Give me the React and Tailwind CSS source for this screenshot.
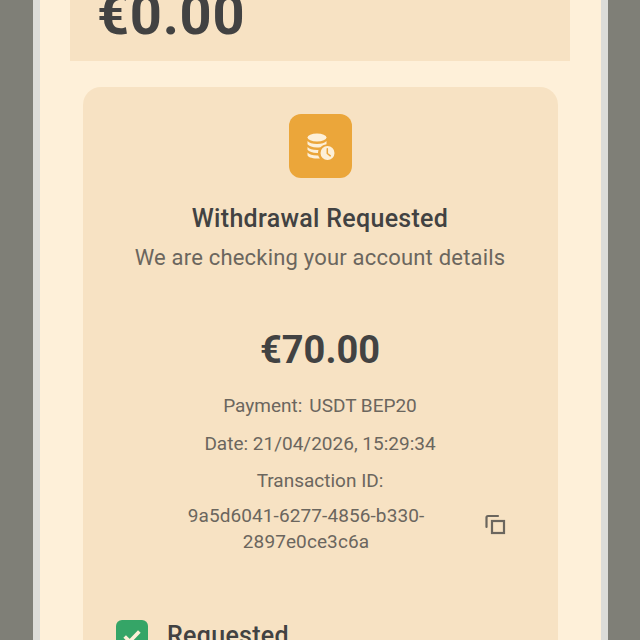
export default function App() {
  return (
    <div className="h-[640px] w-[640px] overflow-hidden bg-[#7f7f77] pl-[33px] pr-[32px] font-['Roboto',sans-serif]">
      <div className="flex h-[640px] flex-col border-x-[7px] border-x-[#dcdcd8] bg-[#fef0d9] pl-[30px] pr-[31px]">
        <div className="flex h-[61px] shrink-0 items-end overflow-hidden bg-[#f7e2c3] pl-[27px]">
          <div className="mb-[18px] text-[56px] font-bold leading-[56px] tracking-[0.7px] text-[#424242]">€0.00</div>
        </div>
        <div className="ml-[13px] mr-[12px] mt-[26px] flex h-[600px] shrink-0 flex-col items-center rounded-t-[18px] bg-[#f7e2c3] pr-[1px] pt-[27px]">
          <div className="flex h-[64px] w-[63px] items-center justify-center rounded-[12px] bg-[#eba63a]">
            <svg width="32" height="32" viewBox="0 0 32 32" fill="#fdf0d8">
              <ellipse cx="13" cy="7.5" rx="9.5" ry="4" />
              <path d="M3.5 11c1.500 2 5 3 9.500 3s8-1 9.500-3v3.200c-2.500.4-4.600 1.500-6 3-1 .2-2.300.3-3.500.3-4.500 0-8-1.200-9.500-3.200z" />
              <path d="M3.500 17c1.500 2 5 3 9.500 3 .5 0 1 0 1.500-.1-.3 1-.5 2-.5 3.100-.4 0-.7 0-1 0-4.500 0-8-1.200-9.500-3.200z" />
              <path d="M3.500 22.500c1.500 2 5 3 9.500 3 .4 0 .8 0 1.200 0 .4 1.100 1 2.100 1.700 2.900-.9.100-1.900.100-2.900.100-5.500 0-9.500-1.700-9.500-3.500z" />
              <circle cx="23.500" cy="23" r="7" />
              <path d="M23.300 18.800v4.700l3 2.300" fill="none" stroke="#eba63a" strokeWidth="1.500" strokeLinecap="round" />
            </svg>
          </div>
          <div className="mt-[27px] text-[25px] font-medium leading-[28px] tracking-[0.3px] text-[#424242]">Withdrawal Requested</div>
          <div className="mt-[11px] text-[22px] leading-[28px] tracking-[0.2px] text-[#6b665e]">We are checking your account details</div>
          <div className="mt-[56px] text-[38px] font-bold leading-[44px] text-[#424242]">€70.00</div>
          <div className="mt-[21px] flex flex-col items-center gap-[11.5px] text-[19px] leading-[26px] text-[#6b665e]">
            <div className="flex gap-[7px]"><span>Payment:</span><span>USDT BEP20</span></div>
            <div>Date: 21/04/2026, 15:29:34</div>
            <div>Transaction ID:</div>
          </div>
          <div className="relative mt-[9px] w-full text-center text-[19px] leading-[26px] tracking-[0.1px] text-[#6b665e]">
            <div className="pr-[28px]">9a5d6041-6277-4856-b330-<br />2897e0ce3c6a</div>
            <svg className="absolute left-[400px] top-[9px]" width="24" height="24" viewBox="0 0 24 24" fill="none" stroke="#6b665e" strokeWidth="2.2">
              <rect x="9" y="9" width="12" height="12" />
              <path d="M15 4H5a1.500 1.500 0 0 0-1.500 1.500V15" strokeLinecap="round" />
            </svg>
          </div>
          <div className="mt-[65px] flex w-full items-center gap-[19px] pl-[33px]">
            <div className="flex h-[32px] w-[32px] items-center justify-center rounded-[6px] bg-[#35a567]">
              <svg width="22" height="22" viewBox="0 0 24 24" fill="none" stroke="#fdf0d8" strokeWidth="4">
                <path d="M4 12.500l5.500 5.500L20 7" />
              </svg>
            </div>
            <div className="text-[25px] font-medium leading-[32px] tracking-[0.3px] text-[#424242]">Requested</div>
          </div>
        </div>
      </div>
    </div>
  );
}
